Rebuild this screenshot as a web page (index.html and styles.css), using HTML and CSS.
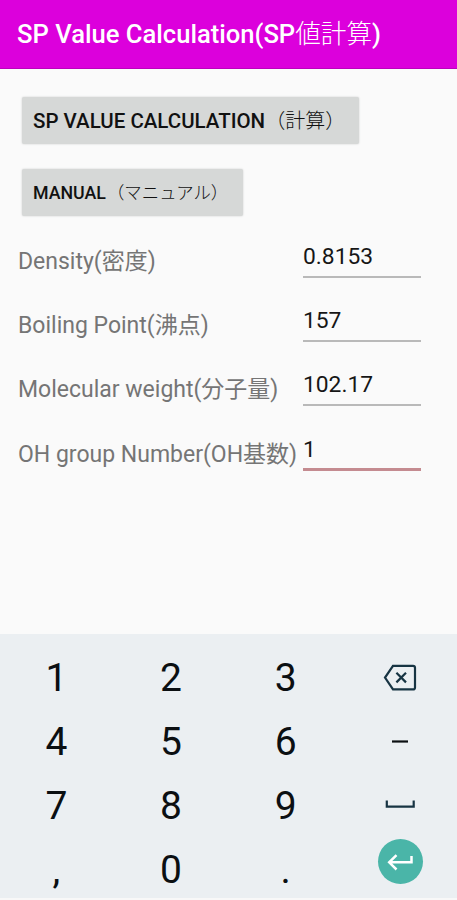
FILE: index.html
```html
<!DOCTYPE html>
<html lang="ja">
<head>
<meta charset="utf-8">
<title>SP Value Calculation</title>
<link rel="stylesheet" href="styles.css">
</head>
<body>
<div class="app">
  <header class="bar"><h1><span>SP Value Calculation(SP</span><span class="cjk">値計算</span><span>)</span></h1></header>
  <main class="content">
    <button class="btn btn-calc"><span>SP VALUE CALCULATION</span><span class="cjk">（計算）</span></button>
    <button class="btn btn-manual"><span>MANUAL</span><span class="cjk">（マニュアル）</span></button>
    <div class="form">
      <div class="row"><div class="label">Density(密度)</div><div class="field">0.8153</div></div>
      <div class="row"><div class="label">Boiling Point(沸点)</div><div class="field">157</div></div>
      <div class="row"><div class="label">Molecular weight(分子量)</div><div class="field">102.17</div></div>
      <div class="row"><div class="label">OH group Number(OH基数)</div><div class="field active">1</div></div>
    </div>
  </main>
  <section class="keypad">
    <div class="key">1</div><div class="key">2</div><div class="key">3</div>
    <div class="key"><svg class="icon" width="36" height="30" viewBox="0 0 36 30"><path d="M11 2.8H31Q33 2.8 33 4.8V24.4Q33 26.4 31 26.4H11L3 14.6Z"/><path d="M14.4 9.8L24 19.4M24 9.8L14.4 19.4"/></svg></div>
    <div class="key">4</div><div class="key">5</div><div class="key">6</div>
    <div class="key"><svg class="icon dash" width="36" height="30" viewBox="0 0 36 30"><path d="M10 14.5H26"/></svg></div>
    <div class="key">7</div><div class="key">8</div><div class="key">9</div>
    <div class="key"><svg class="icon" width="36" height="30" viewBox="0 0 36 30"><path d="M4.8 9.5V15.7H31.7V9.5"/></svg></div>
    <div class="key">,</div><div class="key">0</div><div class="key">.</div>
    <div class="key"><span class="enter"><svg class="icon" width="45" height="45" viewBox="0 0 45 45"><path d="M33.5 17V23.3H11M18.5 16.1L11.2 23.3L18.5 30.5"/></svg></span></div>
  </section>
</div>
</body>
</html>
```

FILE: styles.css
```css
* { box-sizing: border-box; }

body {
  margin: 0;
  font-family: Roboto, "Noto Sans CJK JP", sans-serif;
  background: #fafafa;
}

.app {
  display: flex;
  flex-direction: column;
  width: 457px;
  height: 900px;
  overflow: hidden;
}

.cjk { font-weight: 300; }

.bar {
  display: flex;
  align-items: center;
  height: 69px;
  padding-left: 17px;
  background: #dc00dc;
  border-bottom: 1px solid #bd00bd;
  color: #fff;
}

.bar h1 {
  margin: 0;
  font-size: 25.6px;
  line-height: 36px;
  font-weight: 500;
  white-space: nowrap;
}

.content {
  display: flex;
  flex-direction: column;
  align-items: flex-start;
  height: 565px;
  padding-top: 28px;
}

.btn {
  height: 47px;
  margin: 0 0 25px 22px;
  padding: 0 0 3px 11px;
  border: 0;
  border-radius: 2px;
  background: #d6d8d7;
  box-shadow: 0 0 2px #c8caca;
  color: #111;
  font-family: inherit;
  font-weight: 500;
  text-align: left;
  white-space: nowrap;
}

.btn-calc { width: 337px; font-size: 20.5px; }
.btn-calc .cjk { font-size: 20px; }
.btn-manual { width: 221px; font-size: 17.8px; }
.btn-manual .cjk { margin-left: 1px; font-size: 17.4px; }

.form { margin-top: -10px; }

.row {
  display: grid;
  grid-template-columns: 285px 118px;
  height: 64.2px;
  padding-left: 18px;
  font-size: 22.8px;
  line-height: 30px;
  white-space: nowrap;
}

.label {
  padding-top: 16px;
  color: #757575;
  font-size: 23px;
}

.field {
  height: 47px;
  padding-top: 11px;
  border-bottom: 2px solid #b9b9b9;
  color: #161616;
}

.active { border-bottom: 3px solid #c48b90; }

.keypad {
  display: grid;
  grid-template-columns: repeat(4, 114.7px);
  grid-auto-rows: 64px;
  height: 266px;
  padding-top: 12px;
  background: #ebeff2;
  border-bottom: 2px solid #f8f8f8;
}

.key {
  display: flex;
  align-items: center;
  justify-content: center;
  padding-right: 2px;
  color: #0b0f12;
  font-size: 39px;
  line-height: 46px;
}

.icon {
  fill: none;
  stroke: #173443;
  stroke-width: 2.2;
}

.dash { stroke: #0b0f12; }

.enter {
  display: block;
  width: 45px;
  height: 45px;
  margin-top: -18px;
  border-radius: 50%;
  background: #4ab5a8;
}

.enter .icon { display: block; stroke: #fff; stroke-width: 2.5; }
```
